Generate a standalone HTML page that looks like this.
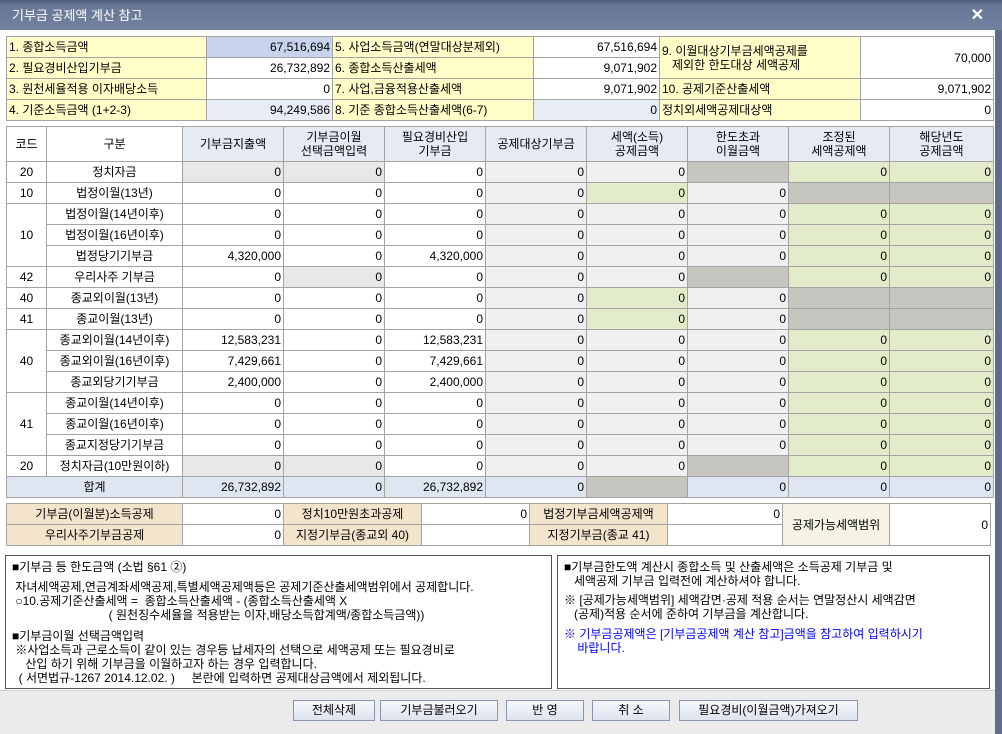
<!DOCTYPE html>
<html><head><meta charset="utf-8"><style>
*{margin:0;padding:0;box-sizing:border-box}
body{width:1002px;height:734px;overflow:hidden;background:#fff;font-family:"Liberation Sans","Noto Sans CJK KR",sans-serif;font-size:12px;color:#000;position:relative}
.title{position:absolute;left:0;top:0;width:1002px;height:30px;background:linear-gradient(#4f5b78,#6a7897 20%,#7381a0);color:#fff;font-size:13px;line-height:32px;padding-left:12px}
.x{position:absolute;right:18px;top:0;font-size:16px;font-weight:bold;line-height:32px}
.rb{position:absolute;right:0;top:30px;width:7px;height:704px;background:#5f6c8a}
.bot{position:absolute;left:0;top:690px;width:995px;height:44px;background:#ebebeb;border-top:1px solid #ccc}
table{position:absolute;border-collapse:collapse;table-layout:fixed}
td{border:1px solid #a3a3a3;height:21px;padding:0 2px;white-space:nowrap;overflow:hidden;line-height:18px}
.y{background:#fffdc8}
.r{text-align:right}
.c{text-align:center}
.lb{background:#c6d3ea}.le{background:#e8ecf5}
.g{background:#f0f0f0}.gg{background:#e8e8e8}.d{background:#c6c5c0}.n{background:#e2ecca}
.h td{background:#e6eaf4;text-align:center;line-height:14px;height:35px}
.s td{background:#dfe5f1}
.t{background:#f3e4cc;text-align:center}
.box{position:absolute;border:1px solid #555;top:555px;height:134px;padding:4px 6px;line-height:14px;font-size:12px;white-space:nowrap;overflow:hidden}
.btn{position:absolute;top:700px;height:21px;border:1px solid #8a96b0;background:linear-gradient(#f5f7fb,#dde3ee);text-align:center;line-height:19px;font-size:12px}
</style></head><body>
<div class="title">기부금 공제액 계산 참고<span class="x">✕</span></div>
<div class="rb"></div>
<table style="left:6px;top:36px;width:987px">
<col style="width:200px"><col style="width:126px"><col style="width:201px"><col style="width:126px"><col style="width:201px"><col style="width:133px">
<tr><td class="y">1. 종합소득금액</td><td class="r lb">67,516,694</td><td class="y">5. 사업소득금액(연말대상분제외)</td><td class="r">67,516,694</td><td class="y" rowspan="2" style="line-height:14px">9. 이월대상기부금세액공제를<br>&nbsp;&nbsp;&nbsp;제외한 한도대상 세액공제</td><td class="r" rowspan="2">70,000</td></tr>
<tr><td class="y">2. 필요경비산입기부금</td><td class="r">26,732,892</td><td class="y">6. 종합소득산출세액</td><td class="r">9,071,902</td></tr>
<tr><td class="y">3. 원천세율적용 이자배당소득</td><td class="r">0</td><td class="y">7. 사업,금융적용산출세액</td><td class="r">9,071,902</td><td class="y">10. 공제기준산출세액</td><td class="r">9,071,902</td></tr>
<tr><td class="y">4. 기준소득금액 (1+2-3)</td><td class="r le">94,249,586</td><td class="y">8. 기준 종합소득산출세액(6-7)</td><td class="r le">0</td><td class="y">정치외세액공제대상액</td><td class="r">0</td></tr>
</table>
<table style="left:6px;top:126px;width:987px">
<col style="width:40px"><col style="width:136px"><col style="width:101px"><col style="width:101px"><col style="width:101px"><col style="width:101px"><col style="width:101px"><col style="width:101px"><col style="width:101px"><col style="width:104px">
<tr class="h"><td style="background:#fff">코드</td><td style="background:#fff">구분</td><td>기부금지출액</td><td>기부금이월<br>선택금액입력</td><td>필요경비산입<br>기부금</td><td>공제대상기부금</td><td>세액(소득)<br>공제금액</td><td>한도초과<br>이월금액</td><td>조정된<br>세액공제액</td><td>해당년도<br>공제금액</td></tr>
<tr><td class="c">20</td><td class="c">정치자금</td><td class="r gg">0</td><td class="r gg">0</td><td class="r">0</td><td class="r g">0</td><td class="r g">0</td><td class="d"></td><td class="r n">0</td><td class="r n">0</td></tr>
<tr><td class="c">10</td><td class="c">법정이월(13년)</td><td class="r">0</td><td class="r">0</td><td class="r">0</td><td class="r g">0</td><td class="r n">0</td><td class="r g">0</td><td class="d"></td><td class="d"></td></tr>
<tr><td class="c" rowspan="3">10</td><td class="c">법정이월(14년이후)</td><td class="r">0</td><td class="r">0</td><td class="r">0</td><td class="r g">0</td><td class="r g">0</td><td class="r g">0</td><td class="r n">0</td><td class="r n">0</td></tr>
<tr><td class="c">법정이월(16년이후)</td><td class="r">0</td><td class="r">0</td><td class="r">0</td><td class="r g">0</td><td class="r g">0</td><td class="r g">0</td><td class="r n">0</td><td class="r n">0</td></tr>
<tr><td class="c">법정당기기부금</td><td class="r">4,320,000</td><td class="r">0</td><td class="r">4,320,000</td><td class="r g">0</td><td class="r g">0</td><td class="r g">0</td><td class="r n">0</td><td class="r n">0</td></tr>
<tr><td class="c">42</td><td class="c">우리사주 기부금</td><td class="r">0</td><td class="r gg">0</td><td class="r">0</td><td class="r g">0</td><td class="r g">0</td><td class="d"></td><td class="r n">0</td><td class="r n">0</td></tr>
<tr><td class="c">40</td><td class="c">종교외이월(13년)</td><td class="r">0</td><td class="r">0</td><td class="r">0</td><td class="r g">0</td><td class="r n">0</td><td class="r g">0</td><td class="d"></td><td class="d"></td></tr>
<tr><td class="c">41</td><td class="c">종교이월(13년)</td><td class="r">0</td><td class="r">0</td><td class="r">0</td><td class="r g">0</td><td class="r n">0</td><td class="r g">0</td><td class="d"></td><td class="d"></td></tr>
<tr><td class="c" rowspan="3">40</td><td class="c">종교외이월(14년이후)</td><td class="r">12,583,231</td><td class="r">0</td><td class="r">12,583,231</td><td class="r g">0</td><td class="r g">0</td><td class="r g">0</td><td class="r n">0</td><td class="r n">0</td></tr>
<tr><td class="c">종교외이월(16년이후)</td><td class="r">7,429,661</td><td class="r">0</td><td class="r">7,429,661</td><td class="r g">0</td><td class="r g">0</td><td class="r g">0</td><td class="r n">0</td><td class="r n">0</td></tr>
<tr><td class="c">종교외당기기부금</td><td class="r">2,400,000</td><td class="r">0</td><td class="r">2,400,000</td><td class="r g">0</td><td class="r g">0</td><td class="r g">0</td><td class="r n">0</td><td class="r n">0</td></tr>
<tr><td class="c" rowspan="3">41</td><td class="c">종교이월(14년이후)</td><td class="r">0</td><td class="r">0</td><td class="r">0</td><td class="r g">0</td><td class="r g">0</td><td class="r g">0</td><td class="r n">0</td><td class="r n">0</td></tr>
<tr><td class="c">종교이월(16년이후)</td><td class="r">0</td><td class="r">0</td><td class="r">0</td><td class="r g">0</td><td class="r g">0</td><td class="r g">0</td><td class="r n">0</td><td class="r n">0</td></tr>
<tr><td class="c">종교지정당기기부금</td><td class="r">0</td><td class="r">0</td><td class="r">0</td><td class="r g">0</td><td class="r g">0</td><td class="r g">0</td><td class="r n">0</td><td class="r n">0</td></tr>
<tr><td class="c">20</td><td class="c">정치자금(10만원이하)</td><td class="r gg">0</td><td class="r gg">0</td><td class="r">0</td><td class="r g">0</td><td class="r g">0</td><td class="d"></td><td class="r n">0</td><td class="r n">0</td></tr>
<tr class="s"><td colspan="2" class="c">합계</td><td class="r">26,732,892</td><td class="r">0</td><td class="r">26,732,892</td><td class="r">0</td><td class="d" style="background:#c6c5c0"></td><td class="r">0</td><td class="r">0</td><td class="r">0</td></tr>
</table>
<table style="left:6px;top:503px;width:984px">
<col style="width:176px"><col style="width:101px"><col style="width:138px"><col style="width:108px"><col style="width:138px"><col style="width:115px"><col style="width:107px"><col style="width:101px">
<tr><td class="t">기부금(이월분)소득공제</td><td class="r">0</td><td class="t">정치10만원초과공제</td><td class="r">0</td><td class="t">법정기부금세액공제액</td><td class="r">0</td><td rowspan="2" class="c" style="background:#f4f3e5">공제가능세액범위</td><td rowspan="2" class="r">0</td></tr>
<tr><td class="t">우리사주기부금공제</td><td class="r">0</td><td class="t">지정기부금(종교외 40)</td><td></td><td class="t">지정기부금(종교 41)</td><td></td></tr>
</table>
<div class="box" style="left:5px;width:547px;padding-top:4px">■기부금 등 한도금액 (소법 §61 ②)<div style="margin-top:6px">&nbsp;자녀세액공제,연금계좌세액공제,특별세액공제액등은 공제기준산출세액범위에서 공제합니다.<br>&nbsp;○10.공제기준산출세액 = &nbsp;종합소득산출세액 - (종합소득산출세액 X<br>&nbsp;&nbsp;&nbsp;&nbsp;&nbsp;&nbsp;&nbsp;&nbsp;&nbsp;&nbsp;&nbsp;&nbsp;&nbsp;&nbsp;&nbsp;&nbsp;&nbsp;&nbsp;&nbsp;&nbsp;&nbsp;&nbsp;&nbsp;&nbsp;&nbsp;&nbsp;&nbsp;&nbsp;&nbsp;( 원천징수세율을 적용받는 이자,배당소득합계액/종합소득금액))</div><div style="margin-top:7px">■기부금이월 선택금액입력<br>&nbsp;※사업소득과 근로소득이 같이 있는 경우등 납세자의 선택으로 세액공제 또는 필요경비로<br>&nbsp;&nbsp;&nbsp;&nbsp;산입 하기 위해 기부금을 이월하고자 하는 경우 입력합니다.<br>&nbsp;&nbsp;( 서면법규-1267 2014.12.02. ) &nbsp;&nbsp;&nbsp;&nbsp;본란에 입력하면 공제대상금액에서 제외됩니다.</div></div>
<div class="box" style="left:557px;width:433px;padding-top:4px">■기부금한도액 계산시 종합소득 및 산출세액은 소득공제 기부금 및<br>&nbsp;&nbsp;&nbsp;세액공제 기부금 입력전에 계산하셔야 합니다.<div style="margin-top:5px">※ [공제가능세액범위] 세액감면·공제 적용 순서는 연말정산시 세액감면<br>&nbsp;&nbsp;&nbsp;(공제)적용 순서에 준하여 기부금을 계산합니다.</div><div style="margin-top:6px;color:#0000ff">※ 기부금공제액은 [기부금공제액 계산 참고]금액을 참고하여 입력하시기<br>&nbsp;&nbsp;&nbsp;&nbsp;바랍니다.</div></div>
<div class="bot"></div>
<div class="btn" style="left:293px;width:82px">전체삭제</div>
<div class="btn" style="left:380px;width:118px">기부금불러오기</div>
<div class="btn" style="left:506px;width:78px">반 영</div>
<div class="btn" style="left:592px;width:78px">취 소</div>
<div class="btn" style="left:679px;width:179px">필요경비(이월금액)가져오기</div>
</body></html>
